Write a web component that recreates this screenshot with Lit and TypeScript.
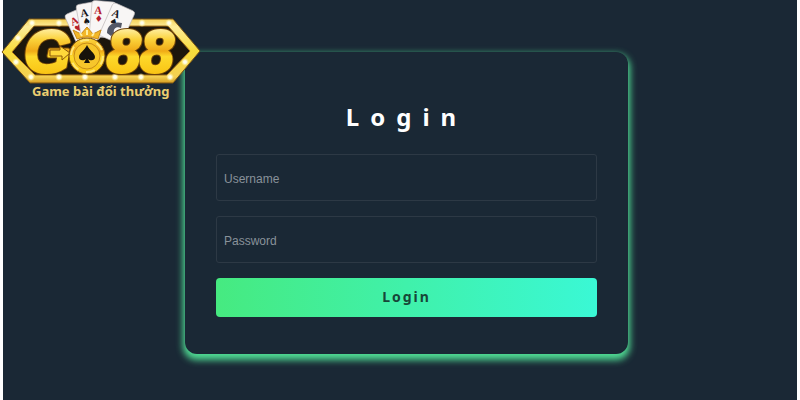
import { LitElement, html, css, svg } from "lit";
import { customElement } from "lit/decorators.js";

const lamps = [
  [32, 23], [59, 23], [142, 23], [169, 23], [18, 38], [16, 62], [31, 77],
  [59, 77], [85, 77], [115, 77], [141, 77], [170, 77], [185, 62],
];

const cards = [
  { x: 79, y: 24, turn: -24, color: "#b5202c", suit: "♥" },
  { x: 88, y: 17, turn: -10, color: "#16171c", suit: "♠" },
  { x: 101, y: 15, turn: 5, color: "#b5202c", suit: "♦" },
  { x: 117, y: 19, turn: 24, color: "#16171c", suit: "♠" },
];

@customElement("brand-logo")
export class BrandLogo extends LitElement {
  static styles = css`
    :host { display: block; }
    .mark { display: block; width: 204px; height: 104px; }
    .letters { font: italic bold 60px "Liberation Sans", Arial, sans-serif; }
    .rank { font: bold 11px "Liberation Serif", serif; }
    .suit { font: 9px "DejaVu Sans", sans-serif; }
    .tagline { font: bold 13px "Noto Sans", sans-serif; }
  `;

  render() {
    return html`
      <svg class="mark" viewBox="0 0 204 104" role="img" aria-label="Go88">
        <defs>
          <linearGradient id="frame" x1="0" y1="0" x2="0" y2="1">
            <stop offset="0" stop-color="#f3cf55" />
            <stop offset=".12" stop-color="#fdec9a" />
            <stop offset=".5" stop-color="#f8dc3a" />
            <stop offset=".9" stop-color="#f3d052" />
            <stop offset="1" stop-color="#d79e22" />
          </linearGradient>
          <linearGradient id="gold" x1="0" y1="28" x2="0" y2="74" gradientUnits="userSpaceOnUse">
            <stop offset="0" stop-color="#fff0a8" />
            <stop offset=".25" stop-color="#fbd23a" />
            <stop offset=".5" stop-color="#f0aa16" />
            <stop offset=".62" stop-color="#fdd92b" />
            <stop offset="1" stop-color="#f9c414" />
          </linearGradient>
          <radialGradient id="lamp">
            <stop offset="0" stop-color="#fff" />
            <stop offset=".4" stop-color="#fffbd5" />
            <stop offset="1" stop-color="#fff2a0" stop-opacity="0" />
          </radialGradient>
        </defs>
        <path d="M29 19H173L200 51L173 83H30L2 52Z" fill="url(#frame)" stroke="#7c5512" stroke-width="1" />
        <path d="M34 26H168L190 51L167 75H35L12 52Z" fill="#1c160c" stroke="#a8731a" stroke-width="1" />
        ${lamps.map(([x, y]) => svg`<circle cx=${x} cy=${y} r="4" fill="url(#lamp)" />`)}
        ${cards.map((c) => svg`
          <g transform="translate(${c.x} ${c.y}) rotate(${c.turn})">
            <rect x="-10" y="-14" width="24" height="36" rx="3" fill="#f8f6f5" stroke="#b9b3b3" stroke-width=".6" />
            <text class="rank" x="-7" y="-1" fill=${c.color}>A</text>
            <text class="suit" x="-6" y="7" fill=${c.color}>${c.suit}</text>
          </g>`)}
        <path d="M107 33C107 25 114 21 122 23L121 28C116 26 113 29 114 33L111 36Z" fill="#535866" />
        <g class="letters" stroke-linejoin="round">
          <g fill="#6f4308" stroke="#6f4308" stroke-width="5">
            <text x="24" y="72">G</text>
            <text x="107" y="72">88</text>
          </g>
          <g fill="url(#gold)" stroke="url(#gold)" stroke-width="3" aria-hidden="true">
            <text x="24" y="72">G</text>
            <text x="107" y="72">88</text>
          </g>
        </g>
        <path d="M50 50H60V46L70 53L62 60V56H50Z" fill="#ffd83b" stroke="#8b560b" />
        <circle cx="87" cy="56" r="18" fill="url(#gold)" stroke="#7a4c0c" />
        <circle cx="87" cy="56" r="16" fill="none" stroke="#ffe777" stroke-width="2" stroke-dasharray="9 8" />
        <circle cx="87" cy="56" r="13" fill="#f7c62b" stroke="#c98d18" />
        <path d="M77 39L73 30L81 34L87 27L93 34L101 30L98 39Q87 35 77 39Z" fill="#f3b728" stroke="#c98a1a" />
        <path d="M80 33L82 36M87 30V35M94 33L92 36" stroke="#fff0a0" stroke-width="2" />
        <path d="M87 45C85 50 79 53 79 57C79 61 84 61 86 59L84 63H90L88 59C90 61 95 61 95 57C95 53 89 50 87 45Z" fill="#17120b" />
        <text class="tagline" x="32" y="96" fill="#ecce70">Game bài đổi thưởng</text>
      </svg>
    `;
  }
}

@customElement("app-root")
export class AppRoot extends LitElement {
  static styles = css`
    :host { display: block; background: #fff; padding: 0 3px; }
    * { box-sizing: border-box; }
    .page {
      position: relative;
      display: flex;
      justify-content: center;
      min-height: 100vh;
      padding: 52px 0 44px 13px;
      background: #1a2835;
    }
    .logo { position: absolute; top: 0; left: -3px; }
    .card {
      display: flex;
      flex-direction: column;
      gap: 15px;
      width: 100%;
      max-width: 443px;
      padding: 47px 31px 37px;
      border-radius: 12px;
      background: #1a2835;
      box-shadow: 0 4px 7px 2px #50dc94;
      align-self: flex-start;
    }
    .title {
      margin: 0 0 5px;
      color: #fff;
      font: bold 24px/35px "Noto Sans", sans-serif;
      letter-spacing: 11px;
      text-align: center;
    }
    .field {
      width: 100%;
      height: 47px;
      padding: 3px 7px 0;
      border: 1px solid #2d3945;
      border-radius: 3px;
      background: transparent;
      color: #fff;
      font: 12px "Liberation Sans", Arial, sans-serif;
    }
    .field::placeholder { color: #89929a; opacity: 1; }
    .submit {
      height: 39px;
      padding: 0 0 2px;
      border: 0;
      border-radius: 4px;
      background: linear-gradient(90deg, #46ea80, #3af8d5);
      color: #174638;
      font: bold 14px "Noto Sans", sans-serif;
      letter-spacing: 2px;
      cursor: pointer;
    }
  `;

  render() {
    return html`
      <main class="page">
        <form class="card" @submit=${(e: Event) => e.preventDefault()}>
          <h1 class="title">Login</h1>
          <input class="field" type="text" name="username" placeholder="Username" aria-label="Username" autocomplete="username" />
          <input class="field" type="password" name="password" placeholder="Password" aria-label="Password" autocomplete="current-password" />
          <button class="submit" type="submit">Login</button>
        </form>
        <brand-logo class="logo"></brand-logo>
      </main>
    `;
  }
}
